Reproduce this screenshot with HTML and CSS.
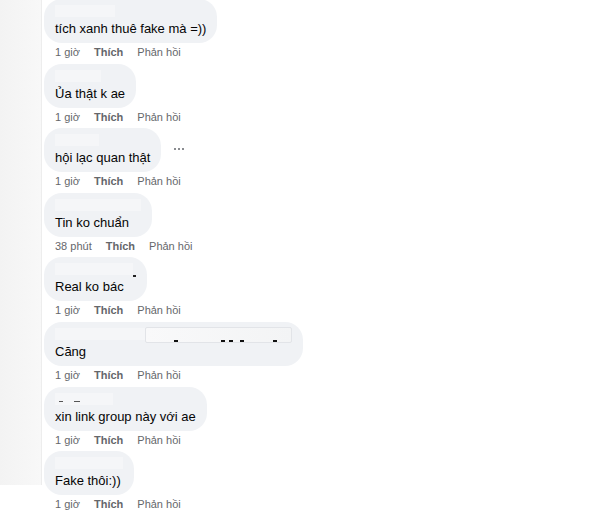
FILE: index.html
```html
<!DOCTYPE html>
<html lang="vi">
<head>
  <meta charset="UTF-8" />
  <meta name="viewport" content="width=device-width, initial-scale=1.0" />
  <title>Bình luận</title>
  <link rel="stylesheet" href="styles.css">
</head>
<body>
  <div class="page">
    <div class="side"></div>

    <div class="comments">
      <div class="comment">
        <div class="bubble">
          <div class="name"><span class="blur" style="width: 60px"></span></div>
          <div class="text">tích xanh thuê fake mà =))</div>
        </div>
        <div class="meta"><span>1 giờ</span><b>Thích</b><span>Phản hồi</span></div>
      </div>

      <div class="comment">
        <div class="bubble">
          <div class="name"><span class="blur" style="width: 46px"></span></div>
          <div class="text">Ủa thật k ae</div>
        </div>
        <div class="meta"><span>1 giờ</span><b>Thích</b><span>Phản hồi</span></div>
      </div>

      <div class="comment">
        <div class="row">
          <div class="bubble">
            <div class="name"><span class="blur" style="width: 44px"></span></div>
            <div class="text">hội lạc quan thật</div>
          </div>
          <div class="more"><i></i><i></i><i></i></div>
        </div>
        <div class="meta"><span>1 giờ</span><b>Thích</b><span>Phản hồi</span></div>
      </div>

      <div class="comment">
        <div class="bubble">
          <div class="name"><span class="blur" style="width: 86px"></span></div>
          <div class="text">Tin ko chuẩn</div>
        </div>
        <div class="meta"><span>38 phút</span><b>Thích</b><span>Phản hồi</span></div>
      </div>

      <div class="comment">
        <div class="bubble">
          <div class="name"><span class="blur" style="width: 78px"></span><span class="dash"></span></div>
          <div class="text">Real ko bác</div>
        </div>
        <div class="meta"><span>1 giờ</span><b>Thích</b><span>Phản hồi</span></div>
      </div>

      <div class="comment">
        <div class="bubble">
          <div class="name">
            <span class="blur" style="width: 90px"></span>
            <span class="box">
              <i style="margin-left: 28px"></i>
              <i style="margin-left: 43px"></i>
              <i style="margin-left: 4px"></i>
              <i style="margin-left: 7px"></i>
              <i style="margin-left: 29px"></i>
            </span>
          </div>
          <div class="text">Căng</div>
        </div>
        <div class="meta"><span>1 giờ</span><b>Thích</b><span>Phản hồi</span></div>
      </div>

      <div class="comment">
        <div class="bubble">
          <div class="name"><span class="blur marks" style="width: 58px"><i></i><i></i></span></div>
          <div class="text">xin link group này với ae</div>
        </div>
        <div class="meta"><span>1 giờ</span><b>Thích</b><span>Phản hồi</span></div>
      </div>

      <div class="comment">
        <div class="bubble">
          <div class="name"><span class="blur" style="width: 68px"></span></div>
          <div class="text">Fake thôi:))</div>
        </div>
        <div class="meta"><span>1 giờ</span><b>Thích</b><span>Phản hồi</span></div>
      </div>
    </div>
  </div>
</body>
</html>
```

FILE: styles.css
```css
body {
  margin: 0;
  background: #ffffff;
  font-family: 'Liberation Sans', Arial, sans-serif;
  color: #050505;
  overflow: hidden;
}
.page {
  display: flex;
  align-items: flex-start;
}
.side {
  width: 41px;
  height: 485px;
  flex: none;
  background: linear-gradient(to right, #f3f3f3, #f8f8f8);
  border-right: 1px solid #ededed;
}
.comments {
  display: flex;
  flex-direction: column;
  align-items: flex-start;
  margin-top: -1px;
  padding-left: 2px;
}
.comment {
  display: flex;
  flex-direction: column;
  align-items: flex-start;
  margin-bottom: 4.6px;
}
.row {
  display: flex;
  align-items: center;
  gap: 13px;
}
.bubble {
  background: #f0f2f5;
  border-radius: 18px;
  padding: 6px 11px 5px 11px;
}
.name {
  height: 15px;
  display: flex;
  align-items: flex-start;
}
.blur {
  display: inline-block;
  height: 12px;
  background: #f5f6f8;
}
.marks {
  display: flex;
  align-items: flex-end;
}
.marks i {
  display: block;
  width: 4px;
  height: 1px;
  background: #555;
  margin-left: 4px;
  margin-bottom: 3px;
}
.marks i + i {
  margin-left: 11px;
  width: 6px;
}
.dash {
  display: inline-block;
  width: 3px;
  height: 2px;
  margin-top: 12px;
  background: #222;
}
.box {
  display: flex;
  align-items: flex-end;
  width: 145px;
  height: 14px;
  margin-top: -1px;
  background: linear-gradient(to right, #f9f9fa, #f3f4f5);
  border: 1px solid #e2e4e8;
  border-radius: 2px;
}
.box i {
  display: block;
  width: 4px;
  height: 2px;
  background: #111;
}
.text {
  font-size: 13px;
  line-height: 18px;
  white-space: nowrap;
}
.more {
  display: flex;
  gap: 2px;
  margin-top: -2px;
}
.more i {
  display: block;
  width: 2px;
  height: 2px;
  background: #8a8c90;
}
.meta {
  display: flex;
  gap: 14px;
  margin-top: 2px;
  padding-left: 11px;
  font-size: 11px;
  line-height: 14px;
  color: #65676b;
}
.meta b {
  font-weight: bold;
}
```
